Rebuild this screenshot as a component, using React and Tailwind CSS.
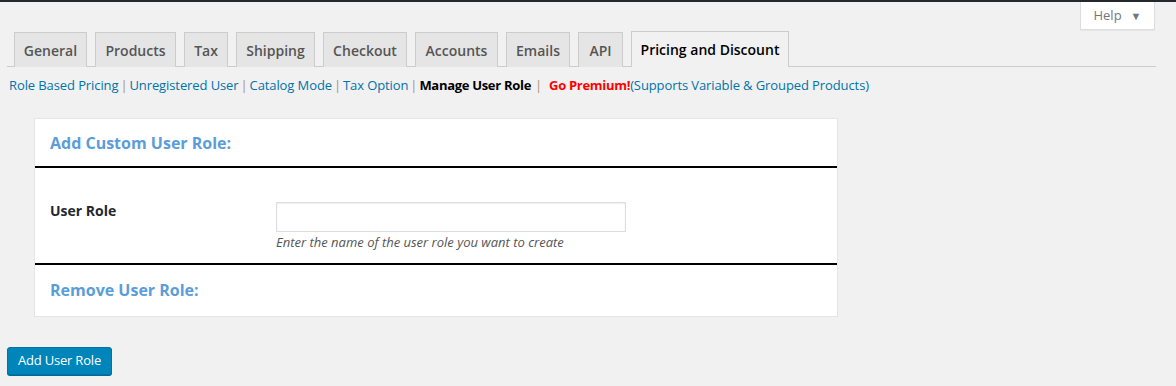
import React from "react";

const tabs = [
  { label: "General", w: "w-[73px]" },
  { label: "Products", w: "w-[81px]" },
  { label: "Tax", w: "w-[44px]" },
  { label: "Shipping", w: "w-[79px]" },
  { label: "Checkout", w: "w-[84px]" },
  { label: "Accounts", w: "w-[83px]" },
  { label: "Emails", w: "w-[64px]" },
  { label: "API", w: "w-[45px]" },
];

const subLinks = ["Role Based Pricing", "Unregistered User", "Catalog Mode", "Tax Option"];

export default function App() {
  return (
    <div
      className="w-[1176px] h-[386px] bg-[#f1f1f1] overflow-hidden text-[#444]"
      style={{ fontFamily: '"Open Sans", "Noto Sans", sans-serif' }}
    >
      <div className="h-[2px] bg-[#23282d]" />

      {/* help tab */}
      <div className="flex justify-end pr-[21px]">
        <button className="h-[28px] w-[75px] bg-white border border-t-0 border-[#ddd] shadow-[0_1px_1px_rgba(0,0,0,0.04)] text-[13px] text-[#72777c] flex items-center justify-center gap-[9px]">
          Help
          <span className="text-[11px] leading-none">▼</span>
        </button>
      </div>

      <div className="pl-[7px] pr-[20px]">
        {/* tabs */}
        <div className="flex items-end gap-[8px] pl-[7px] border-b border-[#ccc] h-[37px]">
          {tabs.map((t) => (
            <div
              key={t.label}
              className={`${t.w} h-[35px] flex items-center justify-center bg-[#e5e5e5] border border-b-0 border-[#ccc] text-[14px] font-semibold text-[#555] -mb-px`}
            >
              {t.label}
            </div>
          ))}
          <div className="w-[158px] h-[36px] flex items-center justify-center bg-[#f1f1f1] border border-b-0 border-[#ccc] text-[14px] font-semibold text-black -mb-px">
            Pricing and Discount
          </div>
        </div>

        {/* sub nav */}
        <div className="mt-[9px] pl-[2px] text-[13px] flex items-center h-[20px] whitespace-nowrap tracking-[-0.1px]">
          {subLinks.map((l) => (
            <React.Fragment key={l}>
              <span className="text-[#0073aa]">{l}</span>
              <span className="text-[#a98f7a] px-[2px]">|</span>
            </React.Fragment>
          ))}
          <span className="font-bold text-black tracking-[-0.3px]">Manage User Role</span>
          <span className="text-[#a98f7a] pl-[4px] pr-[7px]">|</span>
          <span className="font-bold text-[#ff0000] tracking-[-0.3px]">Go Premium!</span>
          <span className="text-[#0073aa]">(Supports Variable &amp; Grouped Products)</span>
        </div>

        {/* card */}
        <div className="ml-[27px] mt-[22px] w-[804px] bg-white border border-[#e5e5e5]">
          <div className="h-[47px] flex items-center px-[15px]">
            <h2 className="text-[16px] font-bold text-[#5b9dd9]">Add Custom User Role:</h2>
          </div>
          <div className="h-[2px] bg-black" />
          <div className="flex pl-[15px] pt-[34px] pb-[10px]">
            <label className="w-[226px] text-[14px] font-bold text-[#23282d] leading-[18px]">User Role</label>
            <div>
              <input
                type="text"
                className="w-[350px] h-[30px] border border-[#ddd] shadow-[inset_0_1px_2px_rgba(0,0,0,0.07)] bg-white outline-none"
              />
              <p className="mt-[1px] text-[13px] italic text-[#555]">
                Enter the name of the user role you want to create
              </p>
            </div>
          </div>
          <div className="h-[2px] bg-black" />
          <div className="h-[51px] flex items-center px-[15px]">
            <h2 className="text-[16px] font-bold text-[#5b9dd9]">Remove User Role:</h2>
          </div>
        </div>

        <button className="mt-[30px] h-[28px] px-[10px] bg-[#0085ba] border border-[#0073aa] rounded-[3px] text-white text-[13px] tracking-[-0.2px] shadow-[0_1px_0_#006799]">
          Add User Role
        </button>
      </div>
    </div>
  );
}
